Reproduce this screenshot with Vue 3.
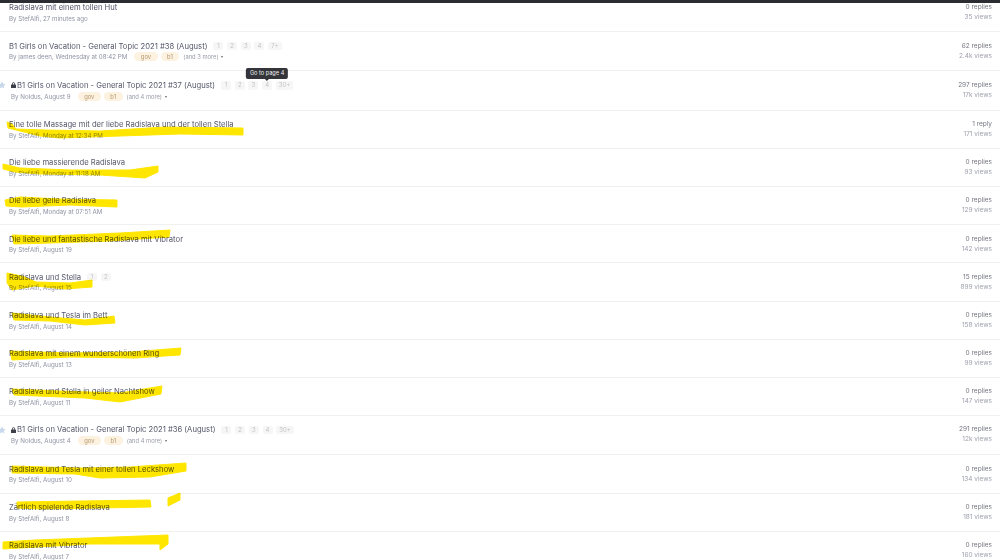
<script setup>
const topics = [
  { title: 'Radislava mit einem tollen Hut', by: 'StefAlfi', date: '27 minutes ago', replies: '0 replies', views: '35 views' },
  { title: 'B1 Girls on Vacation - General Topic 2021 #38 (August)', by: 'james deen', date: 'Wednesday at 08:42 PM', replies: '62 replies', views: '2.4k views', pages: ['1', '2', '3', '4', '7+'], tags: ['gov', 'b1'], more: '(and 3 more)' },
  { title: 'B1 Girls on Vacation - General Topic 2021 #37 (August)', by: 'Noldus', date: 'August 9', replies: '297 replies', views: '17k views', pages: ['1', '2', '3', '4', '30+'], tags: ['gov', 'b1'], more: '(and 4 more)', pinned: true, tip: true },
  { title: 'Eine tolle Massage mit der liebe Radislava und der tollen Stella', by: 'StefAlfi', date: 'Monday at 12:34 PM', replies: '1 reply', views: '171 views' },
  { title: 'Die liebe massierende Radislava', by: 'StefAlfi', date: 'Monday at 11:18 AM', replies: '0 replies', views: '93 views' },
  { title: 'Die liebe geile Radislava', by: 'StefAlfi', date: 'Monday at 07:51 AM', replies: '0 replies', views: '129 views' },
  { title: 'Die liebe und fantastische Radislava mit Vibrator', by: 'StefAlfi', date: 'August 19', replies: '0 replies', views: '142 views' },
  { title: 'Radislava und Stella', by: 'StefAlfi', date: 'August 15', replies: '15 replies', views: '899 views', pages: ['1', '2'] },
  { title: 'Radislava und Tesla im Bett', by: 'StefAlfi', date: 'August 14', replies: '0 replies', views: '158 views' },
  { title: 'Radislava mit einem wunderschönen Ring', by: 'StefAlfi', date: 'August 13', replies: '0 replies', views: '99 views' },
  { title: 'Radislava und Stella in geiler Nachtshow', by: 'StefAlfi', date: 'August 11', replies: '0 replies', views: '147 views' },
  { title: 'B1 Girls on Vacation - General Topic 2021 #36 (August)', by: 'Noldus', date: 'August 4', replies: '291 replies', views: '12k views', pages: ['1', '2', '3', '4', '30+'], tags: ['gov', 'b1'], more: '(and 4 more)', pinned: true },
  { title: 'Radislava und Tesla mit einer tollen Leckshow', by: 'StefAlfi', date: 'August 10', replies: '0 replies', views: '134 views' },
  { title: 'Zärtlich spielende Radislava', by: 'StefAlfi', date: 'August 8', replies: '0 replies', views: '181 views' },
  { title: 'Radislava mit Vibrator', by: 'StefAlfi', date: 'August 7', replies: '0 replies', views: '160 views' }
]

// marker strokes painted over the screenshot
const strokes = [
  '7,122 12,124 16,129 45,130 100,131 165,127 243,128 243,135 180,134 120,136 60,138 40,136 20,131 8,128',
  '3,164 20,168 70,170 130,170 158,166 158,172 145,178 100,175 40,174 15,172 3,169',
  '5,200 20,197 60,199 117,200 117,207 70,205 22,207 6,206',
  '12,235 50,236 120,233 170,230 169,237 110,241 50,243 14,244',
  '7,273 22,276 36,282 70,283 92,280 92,287 65,289 35,286 12,290 7,283',
  '12,313 50,317 85,320 114,316 115,323 85,325 50,321 14,320',
  '10,351 70,353 130,352 181,348 180,355 135,358 70,357 12,360',
  '12,389 60,391 120,393 162,386 161,394 120,402 85,398 14,395',
  '12,466 80,468 130,467 186,463 186,471 150,477 100,478 75,474 12,473',
  '17,502 80,501 150,500 151,507 100,508 40,509 17,508',
  '168,498 180,493 180,500 168,506',
  '3,542 35,540 168,535 168,544 160,550 160,544 90,544 3,549'
]
</script>

<template>
  <div class="page">
    <div class="topbar"></div>
    <div class="list">
      <div v-for="t in topics" :key="t.title" class="row" :class="{ pinned: t.pinned, tagged: t.tags }">
        <svg v-if="t.pinned" class="star" width="8" height="8" viewBox="0 0 24 24">
          <path d="M12 1l3.4 7.2 7.8 1-5.7 5.4 1.5 7.8L12 18.6 5 22.4l1.5-7.8L.8 9.2l7.8-1z" />
        </svg>
        <div class="main">
          <div class="title">
            <svg v-if="t.pinned" class="lock" width="5" height="6" viewBox="0 0 10 12">
              <path d="M2 5V3.5a3 3 0 0 1 6 0V5h1a1 1 0 0 1 1 1v5a1 1 0 0 1-1 1H1a1 1 0 0 1-1-1V6a1 1 0 0 1 1-1zm1.500 0h3V3.500a1.500 1.500 0 0 0-3 0z" />
            </svg>
            <span>{{ t.title }}</span>
            <span v-if="t.pages" class="pages">
              <span v-for="p in t.pages" :key="p" class="pg">
                {{ p }}
                <span v-if="t.tip && p === '4'" class="tip">Go to page 4</span>
              </span>
            </span>
          </div>
          <div class="meta">
            <span>By {{ t.by }}, {{ t.date }}</span>
            <span v-for="tag in t.tags" :key="tag" class="tag">{{ tag }}</span>
            <span v-if="t.more" class="more">{{ t.more }} <i class="caret"></i></span>
          </div>
        </div>
        <div class="stats">
          <div class="replies">{{ t.replies }}</div>
          <div>{{ t.views }}</div>
        </div>
      </div>
    </div>
    <svg class="marker" width="1000" height="560" viewBox="0 0 1000 560">
      <polygon v-for="s in strokes" :key="s" :points="s" />
    </svg>
  </div>
</template>

<style scoped>
.page {
  position: relative;
  width: 1000px;
  height: 560px;
  overflow: hidden;
  background: #fff;
  font-family: Inter, "Liberation Sans", sans-serif;
  filter: blur(0.4px);
}

.topbar {
  position: absolute;
  top: 0;
  left: 0;
  right: 0;
  height: 3px;
  background: #2b2d33;
  z-index: 2;
}

.list {
  margin-top: -5.9px;
}

.row {
  position: relative;
  display: flex;
  justify-content: space-between;
  padding: 8.3px 8px 7.4px 9px;
  border-bottom: 1px solid #f0f0f0;
}

.row.tagged {
  padding-bottom: 8.4px;
}

.row.pinned {
  padding-left: 11px;
}

.star {
  position: absolute;
  left: -2px;
  top: 10px;
  fill: #c9d8ec;
}

.title {
  display: flex;
  align-items: center;
  height: 11px;
  font-size: 7.65px;
  color: #55576a;
  white-space: nowrap;
}

.lock {
  margin-right: 1px;
  fill: #3c3e48;
}

.pages {
  display: flex;
  gap: 3.7px;
  margin-left: 6px;
}

.pg {
  position: relative;
  min-width: 10px;
  height: 8.500px;
  padding: 0 3px;
  box-sizing: border-box;
  background: #f6f6f6;
  border-radius: 2px;
  font-size: 6px;
  line-height: 8.500px;
  text-align: center;
  color: #c4c4c8;
}

.tip {
  position: absolute;
  left: 50%;
  bottom: 10.5px;
  transform: translateX(-50%);
  padding: 0 4px;
  height: 11.500px;
  line-height: 11.500px;
  background: #33353a;
  border-radius: 2px;
  font-size: 5.600px;
  color: #eee;
  white-space: nowrap;
  z-index: 1;
}

.tip::after {
  content: "";
  position: absolute;
  left: 50%;
  top: 100%;
  margin-left: -2px;
  border: 2px solid transparent;
  border-top-color: #33353a;
}

.meta {
  display: flex;
  align-items: center;
  height: 10.500px;
  font-size: 6.200px;
  color: #8f93a3;
  white-space: nowrap;
}

.tag {
  margin-left: 7px;
  padding: 0 6.500px;
  height: 9px;
  line-height: 9px;
  background: #fdf1e0;
  border-radius: 5px;
  font-size: 5.800px;
  color: #b3976f;
}

.tag + .tag {
  margin-left: 3px;
}

.more {
  margin-left: 4px;
  font-size: 5.800px;
  color: #9a9daa;
}

.caret {
  display: inline-block;
  margin-left: 1px;
  vertical-align: 1px;
  border: 1.500px solid transparent;
  border-top: 2px solid #666;
  border-bottom: 0;
}

.stats {
  text-align: right;
  font-size: 6.500px;
  line-height: 10px;
  color: #9ea1ad;
}

.replies {
  color: #74767f;
}

.marker {
  position: absolute;
  top: 0;
  left: 0;
  mix-blend-mode: multiply;
  fill: #ffe600;
  stroke: #ffe600;
  stroke-linejoin: round;
  stroke-width: 1px;
  pointer-events: none;
}
</style>
